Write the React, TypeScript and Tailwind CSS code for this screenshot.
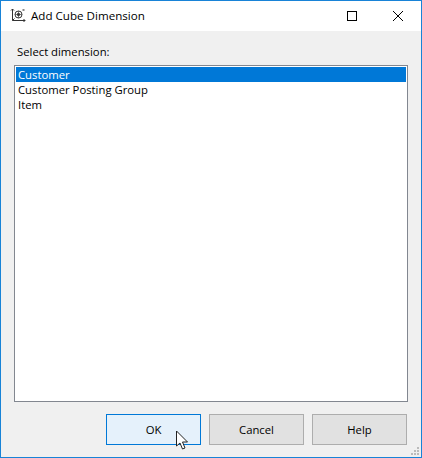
export default function App() {
  return (
    <div className="w-[422px] h-[458px] flex flex-col border border-[#1883d7] bg-[#f0f0f0] text-[11.3px] text-black font-['Open_Sans','Noto_Sans',sans-serif] relative overflow-hidden">
      <div className="h-[30px] bg-white flex items-center shrink-0">
        <svg className="ml-[9px] w-[17px] h-[16px]" viewBox="0 0 17 16" fill="none" stroke="#333" strokeWidth="1">
          <path d="M2.5 1V12.5H15" />
          <path d="M1 2.5L2.5 1L4 2.5M13.5 11L15 12.5L13.5 14" />
          <path d="M4.5 10.5L2.5 12.5" />
          <circle cx="8.5" cy="6.5" r="3.5" />
          <circle cx="8.5" cy="6.5" r="1.2" fill="#333" />
          <path d="M5 6.5H12M8.5 3V10" strokeWidth="0.6" />
          <rect x="12.5" y="1" width="2" height="2" fill="#888" stroke="none" />
        </svg>
        <span className="ml-[4px] text-[11.6px]">Add Cube Dimension</span>
        <div className="ml-auto flex items-center">
          <svg className="w-[10px] h-[10px] mr-[36px]" viewBox="0 0 10 10" fill="none" stroke="#000"><rect x="0.5" y="0.5" width="9" height="9" /></svg>
          <svg className="w-[10px] h-[10px] mr-[18px]" viewBox="0 0 10 10" fill="none" stroke="#000"><path d="M0 0L10 10M10 0L0 10" /></svg>
        </div>
      </div>
      <div className="flex-1 flex flex-col px-[13px] min-h-0">
        <div className="mt-[13px] h-[16px] leading-[16px] ml-[3px]">Select dimension:</div>
        <div className="mt-[5px] h-[337px] bg-white border border-[#828790] p-[1px] leading-[15px]">
          <div className="h-[15px] bg-[#0078d7] text-white pl-[2px]">Customer</div>
          <div className="h-[15px] pl-[2px]">Customer Posting Group</div>
          <div className="h-[15px] pl-[2px]">Item</div>
        </div>
        <div className="mt-[12px] flex justify-end gap-[8px] pr-[1px]">
          <button className="w-[95px] h-[31px] pt-[1px] bg-[#e5f1fb] border border-[#0078d7]">OK</button>
          <button className="w-[95px] h-[31px] pt-[1px] bg-[#e1e1e1] border border-[#adadad]">Cancel</button>
          <button className="w-[95px] h-[31px] pt-[1px] bg-[#e1e1e1] border border-[#adadad]">Help</button>
        </div>
      </div>
      <svg className="absolute left-[174px] top-[429px] w-[14px] h-[21px]" viewBox="0 0 14 21">
        <path d="M1.5 1V16L5 13L7.5 19L10 18L7.5 12H12.5Z" fill="#fff" stroke="#222" strokeWidth="1" />
      </svg>
      <svg className="absolute right-[1px] bottom-[1px] w-[10px] h-[10px]" viewBox="0 0 10 10" fill="#bbb">
        <rect x="7" y="1" width="2" height="2" /><rect x="4" y="4" width="2" height="2" /><rect x="7" y="4" width="2" height="2" /><rect x="1" y="7" width="2" height="2" /><rect x="4" y="7" width="2" height="2" /><rect x="7" y="7" width="2" height="2" />
      </svg>
    </div>
  );
}
